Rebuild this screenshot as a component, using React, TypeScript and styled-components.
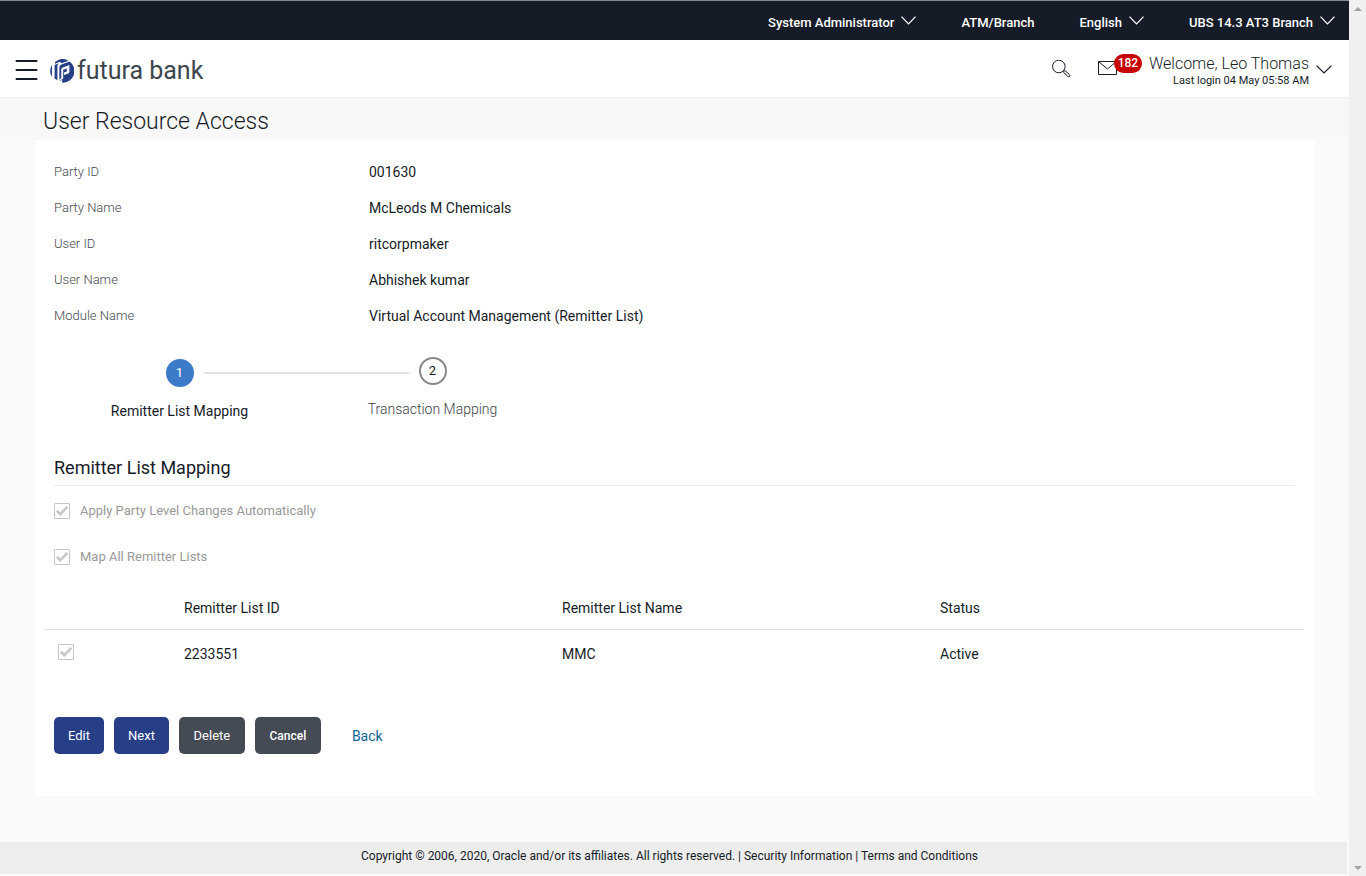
import React from "react";
import styled, { createGlobalStyle } from "styled-components";

const GlobalStyle = createGlobalStyle`
  *, *::before, *::after { box-sizing: border-box; }
  body {
    margin: 0;
    background: #fafafa;
    color: #161c27;
    font-family: Roboto, "Liberation Sans", sans-serif;
    font-size: 14px;
  }
  button, input { font-family: inherit; }
  a { color: inherit; text-decoration: none; }
`;

const Shell = styled.div`
  display: flex;
  min-height: 100vh;
`;

const Page = styled.div`
  flex: 1;
  min-width: 0;
  display: flex;
  flex-direction: column;
`;

const ScrollTrack = styled.div`
  width: 17px;
  padding: 7px 0 6px;
  background: #f0f0f0;
  display: flex;
  flex-direction: column;
  justify-content: space-between;
  align-items: center;
`;

const TopBar = styled.nav`
  display: flex;
  justify-content: flex-end;
  align-items: center;
  gap: 45px;
  height: 40px;
  padding: 4px 14px 0 0;
  border-top: 1px solid #868b90;
  background: #161c27;
`;

const TopItem = styled.button`
  display: flex;
  align-items: center;
  gap: 7px;
  padding: 0;
  border: 0;
  background: none;
  color: #fff;
  font-size: 13px;
  font-weight: 500;
  line-height: 20px;
  svg { margin-bottom: 4px; }
`;

const Header = styled.header`
  display: flex;
  align-items: center;
  height: 58px;
  padding: 2px 17px 0 15px;
  border-bottom: 1px solid #f0f0f0;
  background: #fff;
`;

const IconButton = styled.button`
  display: flex;
  padding: 0;
  border: 0;
  background: none;
  color: #161c27;
`;

const Brand = styled.a`
  display: flex;
  align-items: center;
  gap: 3px;
  margin-left: 12px;
  padding-top: 2px;
  color: #3d454f;
  font-size: 25px;
  line-height: 28px;
`;

const HeaderTools = styled.div`
  display: flex;
  align-items: center;
  margin-left: auto;
`;

const MailButton = styled(IconButton)`
  position: relative;
  margin: 0 32px 0 27px;
`;

const Badge = styled.span`
  position: absolute;
  left: 16px;
  top: -7px;
  width: 28px;
  border-radius: 10px;
  background: #c70000;
  color: #fff;
  font-size: 12px;
  font-weight: 500;
  line-height: 19px;
  text-align: center;
`;

const Welcome = styled.div`
  margin-right: 7px;
  padding-top: 4px;
  text-align: right;
`;

const WelcomeName = styled.div`
  font-size: 16px;
  font-weight: 300;
  line-height: 18px;
`;

const LastLogin = styled.div`
  font-size: 11px;
  line-height: 16px;
`;

const PageTitle = styled.h1`
  margin: 0;
  padding: 10px 43px 4px;
  background: #f8f8f8;
  font-size: 23px;
  font-weight: 300;
  line-height: 28px;
`;

const Card = styled.main`
  margin: 0 34px 46px 35px;
  padding: 14px 11px 42px 9px;
  background: #fff;
`;

const Details = styled.dl`
  display: grid;
  grid-template-columns: 1fr 3fr;
  margin: 0;
  line-height: 36px;
`;

const Term = styled.dt`
  padding-left: 10px;
  color: #454a52;
  font-size: 13px;
  font-weight: 300;
`;

const Value = styled.dd`
  margin: 0;
  padding-left: 10px;
  font-size: 14px;
`;

const Steps = styled.ol`
  display: flex;
  margin: 0;
  padding: 23px 9px 0;
  list-style: none;
`;

const Step = styled.li<{ $active?: boolean }>`
  position: relative;
  width: 253px;
  padding-top: ${(p) => (p.$active ? 2 : 0)}px;
  display: flex;
  flex-direction: column;
  align-items: center;
  gap: 14px;
  color: ${(p) => (p.$active ? "#161c27" : "#3a3f47")};
  font-size: 14px;
  font-weight: ${(p) => (p.$active ? 400 : 300)};
  line-height: 20px;
`;

const StepNumber = styled.span<{ $active?: boolean }>`
  width: 28px;
  height: 28px;
  border: 2px solid ${(p) => (p.$active ? "#3c7bc8" : "#85898d")};
  border-radius: 50%;
  background: ${(p) => (p.$active ? "#3c7bc8" : "#fff")};
  color: ${(p) => (p.$active ? "#fff" : "#161c27")};
  font-size: 13px;
  font-weight: 400;
  line-height: 24px;
  text-align: center;
`;

const StepLine = styled.span`
  position: absolute;
  left: calc(50% + 24px);
  top: 15px;
  width: calc(100% - 48px);
  height: 2px;
  background: #e3e3e3;
`;

const SectionTitle = styled.h2`
  margin: 35px 9px 0 10px;
  padding-bottom: 5px;
  border-bottom: 1px solid #ececec;
  font-size: 18px;
  font-weight: 400;
  line-height: 24px;
`;

const Options = styled.div`
  display: flex;
  flex-direction: column;
  gap: 26px;
  padding: 15px 10px 19px;
`;

const Option = styled.label`
  display: flex;
  align-items: center;
  gap: 10px;
  color: #999;
  font-size: 13px;
  line-height: 20px;
`;

const CheckWrap = styled.span`
  position: relative;
  display: block;
  width: 16px;
  height: 16px;
  svg {
    position: absolute;
    inset: 0;
    pointer-events: none;
  }
`;

const CheckInput = styled.input`
  appearance: none;
  display: block;
  width: 16px;
  height: 16px;
  margin: 0;
  border: 1px solid #c6c6c6;
  border-radius: 1px;
  background: #fff;
`;

const Table = styled.table`
  width: 100%;
  table-layout: fixed;
  border-collapse: collapse;
  font-size: 14px;
  line-height: 20px;
  text-align: left;
  th { padding: 12px 14px 11px; border-bottom: 1px solid #e3e3e3; font-weight: 400; }
  td { padding: 14px 14px 12px; vertical-align: top; }
  th:first-child { width: 10%; }
  th:nth-child(2), th:nth-child(3) { width: 30%; }
`;

const Actions = styled.div`
  display: flex;
  align-items: center;
  gap: 10px;
  padding: 41px 10px 0;
`;

const Button = styled.button<{ $tone: "primary" | "neutral"; $strong?: boolean }>`
  min-width: ${(p) => (p.$tone === "primary" ? 50 : 66)}px;
  height: 37px;
  padding: 0 14px;
  border: 0;
  border-radius: 5px;
  background: ${(p) => (p.$tone === "primary" ? "#263f86" : "#454b55")};
  color: #fff;
  font-size: ${(p) => (p.$strong ? 12 : 13)}px;
  font-weight: ${(p) => (p.$strong ? 500 : 400)};
`;

const BackLink = styled.a`
  margin-left: 21px;
  color: #0f6497;
  font-size: 14px;
`;

const Footer = styled.footer`
  margin: auto 2px 2px 0;
  padding: 4px 8px 8px 0;
  background: #ededed;
  font-size: 12px;
  line-height: 20px;
  text-align: center;
`;

const Chevron = ({ width = 15 }: { width?: number }) => (
  <svg width={width} height="9" viewBox="0 0 15 9" preserveAspectRatio="none" fill="none" stroke="currentColor" strokeWidth="1.2" aria-hidden="true">
    <path d="M0.5 0.7 7.5 7.9 14.5 0.7" />
  </svg>
);

const ScrollArrow = ({ up }: { up?: boolean }) => (
  <svg width="8" height="4" viewBox="0 0 8 4" fill="#a0a0a0" aria-hidden="true">
    <path d={up ? "M0 4 4 0 8 4Z" : "M0 0h8L4 4Z"} />
  </svg>
);

const Logo = () => (
  <svg width="24" height="24" viewBox="0 0 24 24" fill="none" aria-hidden="true">
    <path fill="#263f86" d="M2 6V18A11.4 11.4 0 0 1 2 6ZM4.600 6 8.800 4.200C7.600 5.200 7.400 6.400 7.400 8V21.200L4.600 19.600ZM5 3A12 12 0 0 1 18.600 1.700L11.600 4.200 9.800 2.800 5 4.700Z" />
    <path fill="#263f86" d="M9.400 8.500C9.400 6.500 10.600 5.800 12.100 5.200L19.600 2.600A11.700 11.700 0 0 1 12.200 23.800V21L9.400 22Z" />
    <path fill="#fff" d="M11.300 10.400C11.300 9.300 11.900 8.800 12.800 8.500L19.400 6.100V12.400C19.400 13.700 18.700 14.300 17.600 14.700L14 16V13.500L16.800 12.500V9.500L13.200 10.800V19.500L9.400 22V20.500L11.300 19Z" />
  </svg>
);

const Check = ({ id, label }: { id: string; label?: string }) => (
  <CheckWrap>
    <CheckInput type="checkbox" id={id} aria-label={label} defaultChecked disabled />
    <svg viewBox="0 0 16 16" fill="none" stroke="#c6c6c6" strokeWidth="2.6" aria-hidden="true">
      <path d="M2.800 7.800 6.300 11.100 13.400 3.800" />
    </svg>
  </CheckWrap>
);

const details = [
  ["Party ID", "001630"],
  ["Party Name", "McLeods M Chemicals"],
  ["User ID", "ritcorpmaker"],
  ["User Name", "Abhishek kumar"],
  ["Module Name", "Virtual Account Management (Remitter List)"],
];

const remitters = [{ id: "2233551", name: "MMC", status: "Active" }];

export default function App() {
  return (
    <Shell>
      <GlobalStyle />
      <Page>
        <TopBar>
          <TopItem>System Administrator <Chevron /></TopItem>
          <TopItem>ATM/Branch</TopItem>
          <TopItem>English <Chevron /></TopItem>
          <TopItem>UBS 14.3 AT3 Branch <Chevron /></TopItem>
        </TopBar>
        <Header>
          <IconButton aria-label="Menu">
            <svg width="23" height="22" viewBox="0 0 23 22" stroke="currentColor" strokeWidth="2" strokeLinecap="round">
              <path d="M1.500 2h20M1.500 11h20M1.500 20h20" />
            </svg>
          </IconButton>
          <Brand href="#"><Logo />futura bank</Brand>
          <HeaderTools>
            <IconButton aria-label="Search">
              <svg width="20" height="20" viewBox="0 0 20 20" fill="none" stroke="currentColor">
                <circle cx="7.800" cy="6.500" r="6.300" />
                <path d="m12.700 11.400 1.300-.9 4.800 4.500c.8.800-.7 2.500-1.600 1.700L12.400 12.200Z" />
              </svg>
            </IconButton>
            <MailButton aria-label="Messages">
              <svg width="19" height="17" viewBox="0 0 19 17" fill="none" stroke="currentColor">
                <path d="M.5.500h18v13H.500ZM.500.500l9 7.500 9-7.500" />
              </svg>
              <Badge>182</Badge>
            </MailButton>
            <Welcome>
              <WelcomeName>Welcome, Leo Thomas</WelcomeName>
              <LastLogin>Last login 04 May 05:58 AM</LastLogin>
            </Welcome>
            <IconButton aria-label="Profile menu"><Chevron width={16} /></IconButton>
          </HeaderTools>
        </Header>
        <PageTitle>User Resource Access</PageTitle>
        <Card>
          <Details>
            {details.map(([term, value]) => (
              <React.Fragment key={term}>
                <Term>{term}</Term>
                <Value>{value}</Value>
              </React.Fragment>
            ))}
          </Details>
          <Steps>
            <Step $active>
              <StepNumber $active>1</StepNumber>
              Remitter List Mapping
              <StepLine />
            </Step>
            <Step>
              <StepNumber>2</StepNumber>
              Transaction Mapping
            </Step>
          </Steps>
          <SectionTitle>Remitter List Mapping</SectionTitle>
          <Options>
            <Option htmlFor="auto"><Check id="auto" />Apply Party Level Changes Automatically</Option>
            <Option htmlFor="all"><Check id="all" />Map All Remitter Lists</Option>
          </Options>
          <Table>
            <thead>
              <tr>
                <th aria-label="Selected" />
                <th>Remitter List ID</th>
                <th>Remitter List Name</th>
                <th>Status</th>
              </tr>
            </thead>
            <tbody>
              {remitters.map((r) => (
                <tr key={r.id}>
                  <td><Check id={`row-${r.id}`} label={`Remitter list ${r.id}`} /></td>
                  <td>{r.id}</td>
                  <td>{r.name}</td>
                  <td>{r.status}</td>
                </tr>
              ))}
            </tbody>
          </Table>
          <Actions>
            <Button $tone="primary">Edit</Button>
            <Button $tone="primary">Next</Button>
            <Button $tone="neutral">Delete</Button>
            <Button $tone="neutral" $strong>Cancel</Button>
            <BackLink href="#">Back</BackLink>
          </Actions>
        </Card>
        <Footer>
          Copyright © 2006, 2020, Oracle and/or its affiliates. All rights reserved. | <a href="#">Security Information</a> | <a href="#">Terms and Conditions</a>
        </Footer>
      </Page>
      <ScrollTrack aria-hidden="true">
        <ScrollArrow up />
        <ScrollArrow />
      </ScrollTrack>
    </Shell>
  );
}
